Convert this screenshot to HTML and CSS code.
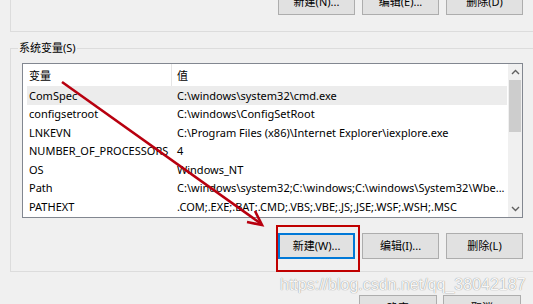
FILE: index.html
```html
<!DOCTYPE html>
<html lang="zh-CN">
<head>
<meta charset="utf-8">
<title>环境变量</title>
<link rel="stylesheet" href="styles.css">
</head>
<body>
<div class="page">
  <div class="user-group">
    <div class="btn-row">
      <button class="btn">新建(N)...</button>
      <button class="btn">编辑(E)...</button>
      <button class="btn">删除(D)</button>
    </div>
  </div>

  <div class="sys-group">
    <div class="legend">系统变量(S)</div>
    <div class="listbox">
      <div class="list">
        <div class="row head"><div class="c1">变量</div><div class="c2">值</div></div>
        <div class="row sel"><div class="c1">ComSpec</div><div class="c2">C:\windows\system32\cmd.exe</div></div>
        <div class="row"><div class="c1">configsetroot</div><div class="c2">C:\windows\ConfigSetRoot</div></div>
        <div class="row"><div class="c1">LNKEVN</div><div class="c2">C:\Program Files (x86)\Internet Explorer\iexplore.exe</div></div>
        <div class="row"><div class="c1">NUMBER_OF_PROCESSORS</div><div class="c2">4</div></div>
        <div class="row"><div class="c1">OS</div><div class="c2">Windows_NT</div></div>
        <div class="row"><div class="c1">Path</div><div class="c2">C:\windows\system32;C:\windows;C:\windows\System32\Wbe...</div></div>
        <div class="row"><div class="c1">PATHEXT</div><div class="c2">.COM;.EXE;.BAT;.CMD;.VBS;.VBE;.JS;.JSE;.WSF;.WSH;.MSC</div></div>
      </div>
      <div class="scrollbar">
        <div class="arrow">
          <svg width="9" height="6" viewBox="0 0 9 6"><path d="M1 5 L4.5 1.5 L8 5" fill="none" stroke="#606060" stroke-width="1.4"/></svg>
        </div>
        <div class="track"><div class="thumb"></div></div>
        <div class="arrow">
          <svg width="9" height="6" viewBox="0 0 9 6"><path d="M1 1 L4.5 4.5 L8 1" fill="none" stroke="#606060" stroke-width="1.4"/></svg>
        </div>
      </div>
    </div>
    <div class="btn-row sys-btns">
      <button class="btn focus">新建(W)...</button>
      <button class="btn">编辑(I)...</button>
      <button class="btn">删除(L)</button>
    </div>
  </div>

  <div class="btn-row dialog-btns">
    <button class="btn wide">确定</button>
    <button class="btn wide">取消</button>
  </div>

  <div class="watermark">https://blog.csdn.net/qq_38042187</div>
  <div class="redbox"></div>
  <svg class="arrow-overlay" width="533" height="304" viewBox="0 0 533 304">
    <line x1="62" y1="82" x2="260" y2="223" stroke="#b8000f" stroke-width="2.6"/>
    <polyline points="247,222 262,225 255,211" fill="none" stroke="#b8000f" stroke-width="2.6" stroke-linejoin="miter"/>
  </svg>
</div>
</body>
</html>
```
FILE: styles.css
```css
* { box-sizing: border-box; }
html, body {
  margin: 0;
  padding: 0;
  background: #f0f0f0;
}
body {
  width: 533px;
  height: 304px;
  overflow: hidden;
  font-family: "Noto Sans", "Noto Sans CJK SC", sans-serif;
  font-size: 11px;
  color: #000;
}
.page {
  position: relative;
  width: 533px;
  height: 304px;
}
.user-group {
  height: 32px;
  margin-left: 10px;
  border-left: 1px solid #dcdcdc;
  border-bottom: 1px solid #dcdcdc;
  display: flex;
  align-items: flex-end;
  justify-content: flex-end;
  padding: 0 10px 16px 0;
}
.btn-row {
  display: flex;
  justify-content: flex-end;
  gap: 7px;
}
.btn {
  flex: none;
  width: 77px;
  height: 26px;
  background: #e1e1e1;
  border: 1px solid #adadad;
  font-family: inherit;
  font-size: 11px;
  color: #000;
  padding: 0;
  margin: 0;
  line-height: 24px;
}
.btn.focus {
  border: 2px solid #0078d7;
  line-height: 22px;
}
.sys-group {
  margin: 16px 0 0 10px;
  border-top: 1px solid #dcdcdc;
  border-left: 1px solid #dcdcdc;
  border-bottom: 1px solid #dcdcdc;
  padding: 0 10px 12px 11px;
}
.legend {
  width: fit-content;
  margin: -9px 0 0 -4px;
  padding: 0 1px;
  line-height: 16px;
  background: #f0f0f0;
}
.listbox {
  margin-top: 7px;
  width: 501px;
  height: 155px;
  border: 1px solid #828790;
  background: #fff;
  display: flex;
}
.list {
  flex: 1;
  padding-left: 4px;
  padding-right: 1px;
  overflow: hidden;
}
.row {
  display: flex;
  height: 18.5px;
  align-items: center;
  white-space: nowrap;
}
.row.head {
  height: 22px;
  align-items: stretch;
}
.row.head .c1, .row.head .c2 {
  display: flex;
  align-items: center;
}
.row.head .c1 {
  border-right: 1px solid #e5e5e5;
}
.row.sel {
  background: #ececec;
}
.c1 {
  width: 145px;
  flex: none;
  padding-left: 2px;
}
.c2 {
  padding-left: 5px;
}
.scrollbar {
  width: 14px;
  flex: none;
  background: #f0f0f0;
  display: flex;
  flex-direction: column;
}
.arrow {
  height: 16px;
  flex: none;
  display: flex;
  align-items: center;
  justify-content: center;
}
.track {
  flex: 1;
  padding: 0 1px;
}
.thumb {
  height: 52px;
  background: #cdcdcd;
}
.sys-btns {
  margin-top: 15px;
}
.dialog-btns {
  margin-top: 23px;
  padding-right: 12px;
  gap: 6px;
}
.btn.wide {
  width: 78px;
}
.watermark {
  position: absolute;
  left: 280px;
  top: 277px;
  font-family: "Liberation Sans", Arial, sans-serif;
  font-size: 16px;
  line-height: 16px;
  color: rgba(255, 255, 255, 0.95);
  text-shadow: 0 0 1px rgba(0, 0, 0, 0.38), 0 0 1px rgba(0, 0, 0, 0.2);
  white-space: nowrap;
}
.redbox {
  position: absolute;
  left: 276px;
  top: 225px;
  width: 84px;
  height: 47px;
  border: 2px solid #c00000;
}
.arrow-overlay {
  position: absolute;
  left: 0;
  top: 0;
  pointer-events: none;
}
```
